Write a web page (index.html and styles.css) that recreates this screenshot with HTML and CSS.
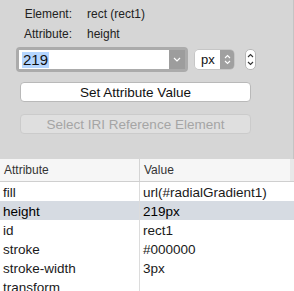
FILE: index.html
```html
<!DOCTYPE html>
<html lang="en">
<head>
    <meta charset="UTF-8">
    <meta name="viewport" content="width=device-width, initial-scale=1.0">
    <title>Attribute Inspector</title>
    <link rel="stylesheet" href="styles.css">
</head>
<body>
<div class="panel">
    <div class="info">
        <div class="label">Element:</div>
        <div class="value">rect (rect1)</div>
        <div class="label">Attribute:</div>
        <div class="value">height</div>
    </div>

    <div class="controls">
        <div class="combo">
            <div class="field"><span class="sel">219</span></div>
            <div class="combo-arrow">
                <svg width="8" height="5" viewBox="0 0 8 5"><path d="M1 1 L4 4 L7 1" fill="none" stroke="#fff" stroke-width="1.2"/></svg>
            </div>
        </div>
        <div class="popup">
            <div class="popup-text">px</div>
            <div class="popup-arrows">
                <svg width="7" height="11" viewBox="0 0 7 11"><path d="M1 4 L3.5 1.5 L6 4 M1 7 L3.5 9.5 L6 7" fill="none" stroke="#fff" stroke-width="1.1"/></svg>
            </div>
        </div>
        <div class="stepper">
            <svg width="7" height="15" viewBox="0 0 7 15"><path d="M1 5 L3.5 2.5 L6 5 M1 10 L3.5 12.5 L6 10" fill="none" stroke="#333" stroke-width="1.1"/></svg>
        </div>
    </div>

    <button class="btn">Set Attribute Value</button>
    <button class="btn disabled">Select IRI Reference Element</button>
</div>

<div class="table">
    <div class="row head">
        <div class="cell">Attribute</div>
        <div class="cell">Value</div>
    </div>
    <div class="row">
        <div class="cell">fill</div>
        <div class="cell">url(#radialGradient1)</div>
    </div>
    <div class="row selected">
        <div class="cell">height</div>
        <div class="cell">219px</div>
    </div>
    <div class="row">
        <div class="cell">id</div>
        <div class="cell">rect1</div>
    </div>
    <div class="row">
        <div class="cell">stroke</div>
        <div class="cell">#000000</div>
    </div>
    <div class="row">
        <div class="cell">stroke-width</div>
        <div class="cell">3px</div>
    </div>
    <div class="row">
        <div class="cell">transform</div>
        <div class="cell"></div>
    </div>
</div>
</body>
</html>
```

FILE: styles.css
```css
*{
    margin: 0px;
    padding: 0px;
    box-sizing: border-box;
}

body{
    font-family: "Liberation Sans", Arial, sans-serif;
    background-color: #ffffff;
    width: 294px;
    height: 291px;
    overflow: hidden;
}

.panel {
    background-color: #d6d6d6;
    height: 159px;
    border-right: 1px solid #c4c4c4;
    padding-top: 4px;
}

.info {
    display: grid;
    grid-template-columns: 72px 1fr;
    column-gap: 15px;
    grid-auto-rows: 20px;
    font-size: 12px;
    color: #222;
    align-items: center;
}

.info .label {
    text-align: right;
}

.controls {
    display: flex;
    align-items: center;
    margin-top: 3px;
    padding-left: 16px;
    height: 25px;
}

.combo {
    display: flex;
    width: 172px;
    height: 25px;
    border: 3px solid #ababab;
    border-radius: 4px;
    background: #ababab;
}

.field {
    flex: 1;
    background: #fff;
    display: flex;
    align-items: center;
    padding-left: 3px;
    font-size: 15px;
    color: #111;
}

.sel {
    background: #b4d5fe;
    padding: 0 1px;
    line-height: 16px;
}

.combo-arrow {
    width: 16px;
    background: #9d9d9d;
    display: flex;
    align-items: center;
    justify-content: center;
}

.popup {
    display: flex;
    margin-left: 7px;
    width: 39px;
    height: 19px;
    border-radius: 4px;
    overflow: hidden;
    box-shadow: 0 0 0 0.5px #b5b5b5;
}

.popup-text {
    flex: 1;
    background: #fff;
    font-size: 13px;
    color: #111;
    display: flex;
    align-items: center;
    padding-left: 6px;
}

.popup-arrows {
    width: 14px;
    background: #a0a0a0;
    display: flex;
    align-items: center;
    justify-content: center;
}

.stepper {
    margin-left: 11px;
    width: 11px;
    height: 21px;
    background: #fff;
    border: 1px solid #b8b8b8;
    border-radius: 5px;
    display: flex;
    align-items: center;
    justify-content: center;
}

.btn {
    display: block;
    margin-left: 20px;
    width: 231px;
    height: 20px;
    background: #ffffff;
    border: 1px solid #b9b9b9;
    border-radius: 4px;
    font-family: "Liberation Sans", Arial, sans-serif;
    font-size: 13.5px;
    color: #111;
    margin-top: 10px;
}

.btn.disabled {
    margin-top: 12px;
    background: #dfdfdf;
    border-color: #cbcbcb;
    color: #a5a5a5;
}

.table {
    font-size: 13.5px;
    color: #1a1a1a;
}

.row {
    display: grid;
    grid-template-columns: 139px 1fr;
    height: 19px;
    align-items: center;
}

.row .cell {
    padding-left: 3px;
    padding-top: 1px;
    height: 100%;
    display: flex;
    align-items: center;
}

.row .cell + .cell {
    border-left: 1px solid #dcdcdc;
    padding-left: 3px;
}

.row.head {
    height: 23px;
    background: #f6f6f6;
    border-bottom: 1px solid #cfcfcf;
    font-size: 12px;
    color: #333;
}

.row.head .cell {
    padding-left: 4px;
    padding-top: 0;
}

.row.head .cell + .cell {
    border-left: 1px solid #d4d4d4;
    border-right: 4px solid #e8e8e8;
}

.row.selected {
    background: #d6dbe2;
    color: #000;
}
```
